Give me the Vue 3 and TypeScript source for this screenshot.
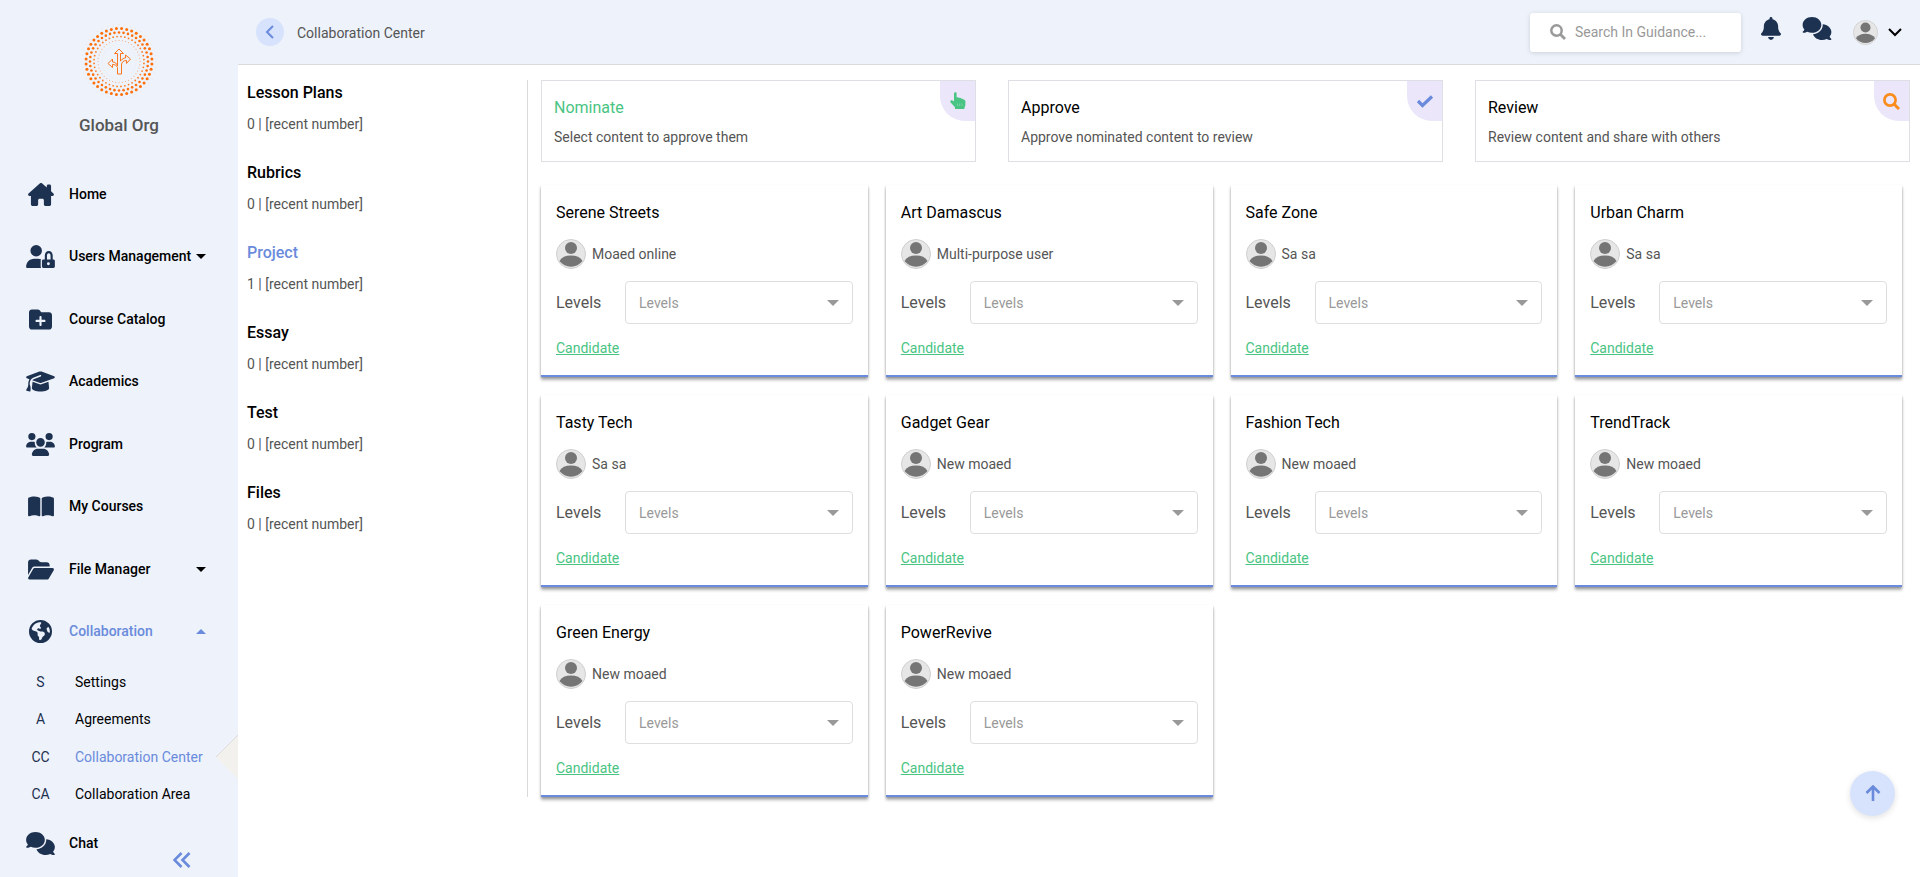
<script setup lang="ts">
import { ref } from 'vue'

interface Glyph { box: string; w: number; d: string }
interface NavItem { label: string; icon: string; caret?: 'down' | 'up'; children?: SubItem[] }
interface SubItem { short: string; label: string; active?: boolean }
interface Topic { title: string; count: number }
interface Stage { title: string; text: string; icon: 'hand' | 'check' | 'search' }
interface Project { title: string; owner: string }

const glyphs: Record<string, Glyph> = {
  home: { box: '0 0 576 512', w: 26, d: 'M575.8 255.5c0 18-15 32.1-32 32.1h-32l.7 160.2c0 2.7-.2 5.4-.5 8.1V472c0 22.1-17.9 40-40 40H392c-22.1 0-40-17.9-40-40V384c0-17.700-14.300-32-32-32H256c-17.700 0-32 14.300-32 32v88c0 22.100-17.900 40-40 40H104c-22.100 0-40-17.900-40-40V287.600H32c-18 0-32-14-32-32.100c0-9 3-17 10-24L266.400 8c7-7 15-8 22-8s15 2 21 7L416 101V64c0-17.700 14.300-32 32-32h32c17.700 0 32 14.300 32 32v121l52.800 46.500c8 7 12 15 11 24z' },
  users: { box: '0 0 640 512', w: 29, d: 'M224 256A128 128 0 1 0 224 0a128 128 0 1 0 0 256zm-45.700 48C79.800 304 0 383.800 0 482.300C0 498.700 13.300 512 29.700 512H334c-7-9.400-10-20.300-10-32V352c0-12 3-24 9-34c-26-9-48-14-61-14H178.300zM384 272v48c-17.700 0-32 14.300-32 32V480c0 17.700 14.300 32 32 32H608c17.700 0 32-14.300 32-32V352c0-17.700-14.300-32-32-32h-16V236c0-60-36-100-88-100s-88 40-88 100v84h-32zM464 320v-80c0-34 14-54 40-54s40 20 40 54v80zM496 384a32 32 0 1 1 0 64a32 32 0 1 1 0-64z' },
  catalog: { box: '0 0 512 512', w: 23, d: 'M512 416c0 35.300-28.700 64-64 64H64c-35.300 0-64-28.700-64-64V96C0 60.700 28.700 32 64 32H192c20.100 0 39.100 9.500 51.200 25.600l19.200 25.600c6 8.100 15.500 12.800 25.600 12.800H448c35.300 0 64 28.700 64 64V416zM232 376c0 13.300 10.700 24 24 24s24-10.700 24-24V312h64c13.300 0 24-10.700 24-24s-10.700-24-24-24H280V200c0-13.300-10.700-24-24-24s-24 10.700-24 24v64H168c-13.300 0-24 10.700-24 24s10.700 24 24 24h64v64z' },
  academics: { box: '0 0 640 512', w: 29, d: 'M320 32c-8.100 0-16.100 1.400-23.700 4.100L15.800 137.400C6.300 140.900 0 149.900 0 160s6.300 19.100 15.800 22.600l57.900 20.900C57.300 229.300 48 259.800 48 291.900v28.100c0 28.400-10.800 57.700-22.300 80.800c-6.500 13-13.900 25.800-22.500 37.600C0 442.700-.9 448.300 .9 453.400s6 8.900 11.200 10.200l64 16c4.200 1.100 8.700 .3 12.400-2s6.300-6.100 7.100-10.400c8.600-42.800 4.300-81.200-2.100-108.700C90.300 344.300 86 329.800 80 316.500V291.900c0-30.200 10.200-58.700 27.900-81.500c12.900-15.500 29.600-28 49.200-35.700l157-61.700c8.200-3.200 17.500 .8 20.700 9s-.8 17.500-9 20.700l-157 61.700c-12.400 4.900-23.300 12.400-32.200 21.600l159.600 57.600c7.600 2.700 15.600 4.100 23.700 4.100s16.100-1.400 23.700-4.100L624.200 182.600c9.500-3.400 15.800-12.500 15.800-22.600s-6.300-19.100-15.800-22.600L343.700 36.100C336.100 33.400 328.100 32 320 32zM128 408c0 35.300 86 72 192 72s192-36.700 192-72L496.700 262.600 354.500 314c-11.100 4-22.800 6-34.500 6s-23.500-2-34.500-6L143.300 262.600 128 408z' },
  program: { box: '0 0 640 512', w: 29, d: 'M128 0a80 80 0 1 1 0 160A80 80 0 1 1 128 0zM512 0a80 80 0 1 1 0 160A80 80 0 1 1 512 0zM0 298.700C0 239.800 47.800 192 106.700 192h42.700c15.900 0 31 3.500 44.600 9.700c-1.300 7.200-1.900 14.700-1.900 22.300c0 38.200 16.800 72.500 43.300 96H21.300C9.600 320 0 310.400 0 298.700zM404.600 320c26.600-23.500 43.300-57.800 43.300-96c0-7.600-.7-15-1.900-22.300c13.600-6.300 28.700-9.700 44.600-9.700h42.700C592.200 192 640 239.800 640 298.700c0 11.800-9.600 21.300-21.300 21.300H404.600zM224 208a96 96 0 1 1 192 0 96 96 0 1 1 -192 0zM128 485.300C128 411.700 187.700 352 261.300 352H378.700C452.300 352 512 411.700 512 485.300c0 14.700-11.900 26.700-26.700 26.700H154.700c-14.700 0-26.700-11.900-26.700-26.700z' },
  courses: { box: '0 0 576 512', w: 26, d: 'M249.600 471.500c10.800 3.800 22.400-4.100 22.400-15.500V78.600c0-4.200-1.600-8.400-5-11C247.400 52 202.400 32 144 32C93.500 32 46.300 45.300 18.100 56.100C6.800 60.500 0 71.700 0 83.800V454.100c0 11.900 12.800 20.200 24.100 16.500C55.600 460.100 105.500 448 144 448c33.900 0 79 14 105.600 23.500zm76.800 0C353 462 398.100 448 432 448c38.500 0 88.400 12.100 119.900 22.600c11.300 3.800 24.100-4.600 24.100-16.500V83.800c0-12.100-6.800-23.300-18.100-27.600C529.700 45.300 482.500 32 432 32c-58.400 0-103.400 20-123 35.600c-3.300 2.600-5 6.800-5 11V456c0 11.400 11.700 19.300 22.400 15.500z' },
  files: { box: '0 0 576 512', w: 26, d: 'M88.700 223.800L0 375.800V96C0 60.700 28.700 32 64 32H181.500c17 0 33.300 6.700 45.300 18.700l26.500 26.500c12 12 28.300 18.700 45.300 18.700H416c35.300 0 64 28.700 64 64v32H144c-22.800 0-43.800 12.100-55.300 31.800zm27.600 16.100C122.100 230 132.600 224 144 224H544c11.500 0 22 6.100 27.700 16.100s5.700 22.200-.1 32.100l-112 192C453.900 474 443.400 480 432 480H32c-11.500 0-22-6.100-27.700-16.100s-5.700-22.200 .1-32.100l112-192z' },
  globe: { box: '0 0 512 512', w: 23, d: 'M57.700 193l9.400 16.400c8.300 14.500 21.900 25.200 38 29.800L163 255.700c17.200 4.900 29 20.600 29 38.500v39.900c0 11 6.200 21 16 25.900s16 14.900 16 25.900v39c0 15.600 14.900 26.900 29.900 22.600c16.100-4.600 28.600-17.500 32.700-33.800l2.800-11.200c4.200-16.900 15.200-31.400 30.300-40l8.100-4.600c15-8.500 24.200-24.500 24.200-41.700v-8.300c0-12.700-5.100-24.900-14.100-33.900l-3.900-3.900c-9-9-21.200-14.100-33.900-14.100H257c-11.100 0-22.100-2.900-31.800-8.400l-34.500-19.700c-4.300-2.500-7.600-6.500-9.200-11.200c-3.200-9.600 1.100-20 10.200-24.500l5.900-3c6.600-3.300 14.300-3.900 21.300-1.500l23.200 7.700c8.200 2.700 17.200-.4 21.900-7.500c4.700-7 4.200-16.300-1.200-22.800l-13.600-16.300c-10-12-9.900-29.500 .3-41.300l15.700-18.300c8.800-10.300 10.200-25 3.500-36.700l-2.400-4.200c-3.500-.2-6.900-.3-10.400-.3C163.100 48 84.400 108.900 57.700 193zM464 256c0-36.800-9.600-71.400-26.400-101.500L412 164.800c-15.700 6.300-23.800 23.800-18.500 39.800l16.900 50.700c3.500 10.400 12 18.300 22.600 20.900l29.100 7.300c1.200-9 1.800-18.200 1.800-27.500zM0 256a256 256 0 1 1 512 0A256 256 0 1 1 0 256z' },
  chat: { box: '0 0 640 512', w: 29, d: 'M208 352c114.900 0 208-78.800 208-176S322.900 0 208 0S0 78.800 0 176c0 38.600 14.700 74.300 39.600 103.400c-3.500 9.400-8.700 17.700-14.200 24.700c-4.800 6.200-9.700 11-13.300 14.300c-1.800 1.600-3.300 2.900-4.300 3.700l-1.300 1C1 327.200-1.400 334.400 .8 340.900S9.100 352 16 352c21.800 0 43.800-5.600 62.100-12.500c9.200-3.500 17.800-7.400 25.300-11.400C134.100 343.300 169.800 352 208 352zM448 176c0 112.300-99.100 196.900-216.500 207C255.800 457.400 336.400 512 432 512c38.200 0 73.900-8.700 104.700-23.900c7.500 4 16 7.900 25.200 11.400c18.300 6.900 40.300 12.500 62.100 12.500c6.900 0 13.100-4.500 15.200-11.100c2.100-6.600-.2-13.800-5.800-17.900l-1.300-1c-1-.8-2.500-2-4.300-3.700c-3.600-3.300-8.500-8.100-13.300-14.300c-5.500-7-10.700-15.400-14.200-24.700c24.900-29 39.600-64.700 39.600-103.400c0-92.800-84.900-168.900-192.600-175.500c.4 5.100 .6 10.300 .6 15.500z' },
}
const bell = 'M224 0c-17.700 0-32 14.300-32 32V51.200C119 66 64 130.600 64 208v18.800c0 47-17.300 92.400-48.500 127.600l-7.400 8.300c-8.400 9.400-10.400 22.900-5.300 34.400S19.400 416 32 416H416c12.600 0 24-7.400 29.200-18.900s3.100-25-5.300-34.400l-7.400-8.300C401.300 319.200 384 273.900 384 226.800V208c0-77.400-55-142-128-156.800V32c0-17.700-14.300-32-32-32zm45.300 493.300c12-12 18.700-28.300 18.700-45.300H224 160c0 17 6.700 33.300 18.700 45.300s28.300 18.700 45.300 18.700s33.300-6.700 45.300-18.700z'

const nav: NavItem[] = [
  { label: 'Home', icon: 'home' },
  { label: 'Users Management', icon: 'users', caret: 'down' },
  { label: 'Course Catalog', icon: 'catalog' },
  { label: 'Academics', icon: 'academics' },
  { label: 'Program', icon: 'program' },
  { label: 'My Courses', icon: 'courses' },
  { label: 'File Manager', icon: 'files', caret: 'down' },
  {
    label: 'Collaboration', icon: 'globe', caret: 'up',
    children: [
      { short: 'S', label: 'Settings' },
      { short: 'A', label: 'Agreements' },
      { short: 'CC', label: 'Collaboration Center', active: true },
      { short: 'CA', label: 'Collaboration Area' },
    ],
  },
  { label: 'Chat', icon: 'chat' },
]

const topics: Topic[] = [
  { title: 'Lesson Plans', count: 0 },
  { title: 'Rubrics', count: 0 },
  { title: 'Project', count: 1 },
  { title: 'Essay', count: 0 },
  { title: 'Test', count: 0 },
  { title: 'Files', count: 0 },
]

const stages: Stage[] = [
  { title: 'Nominate', text: 'Select content to approve them', icon: 'hand' },
  { title: 'Approve', text: 'Approve nominated content to review', icon: 'check' },
  { title: 'Review', text: 'Review content and share with others', icon: 'search' },
]

const projects: Project[] = [
  { title: 'Serene Streets', owner: 'Moaed online' },
  { title: 'Art Damascus', owner: 'Multi-purpose user' },
  { title: 'Safe Zone', owner: 'Sa sa' },
  { title: 'Urban Charm', owner: 'Sa sa' },
  { title: 'Tasty Tech', owner: 'Sa sa' },
  { title: 'Gadget Gear', owner: 'New moaed' },
  { title: 'Fashion Tech', owner: 'New moaed' },
  { title: 'TrendTrack', owner: 'New moaed' },
  { title: 'Green Energy', owner: 'New moaed' },
  { title: 'PowerRevive', owner: 'New moaed' },
]

const activeTopic = ref('Project')
const activeStage = ref('Nominate')
const query = ref('')

// Concentric rings of dots around the emblem: [radius, dot radius, opacity]
const rings: [number, number, number][] = [
  [37, 0.4, 0.25],
  [33, 1.5, 1],
  [29, 1.3, 1],
  [25, 0.9, 0.9],
  [21, 0.5, 0.65],
  [17, 0.3, 0.25],
]
const dots = rings.flatMap(([radius, size, opacity], ring) =>
  Array.from({ length: 40 }, (_, i) => {
    const angle = ((i + (ring % 2) / 2) * Math.PI) / 20
    return { x: 37 + radius * Math.cos(angle), y: 37.5 + radius * Math.sin(angle), size, opacity }
  }),
)
</script>

<template>
  <div class="app">
    <aside class="sidebar">
      <div class="brand">
        <svg class="logo" viewBox="0 0 75 75" aria-hidden="true">
          <circle v-for="(p, i) in dots" :key="i" :cx="p.x" :cy="p.y" :r="p.size" :opacity="p.opacity" fill="#ff6f0a" />
          <path d="M35.500 43.500V50h4v-9c0-3 2-4.500 5-4.500v3l4-4.500-5-4v3c-2 0-3 1-5 3V29.500h3L37 25l-4.500 4.500h3V42c-1-3-2.500-4-5-4v-3L26 39.500l4.500 4v-3c2 0 4 .5 5 3" fill="none" stroke="#f8761f" />
        </svg>
        <span class="org">Global Org</span>
      </div>
      <nav>
        <template v-for="item in nav" :key="item.label">
          <a href="#" class="nav-item" :class="{ current: item.children }">
            <span class="nav-icon">
              <svg :width="glyphs[item.icon].w" height="23" :viewBox="glyphs[item.icon].box" aria-hidden="true">
                <path :d="glyphs[item.icon].d" fill="currentColor" fill-rule="evenodd" />
              </svg>
            </span>
            <span class="nav-label">{{ item.label }}</span>
            <svg v-if="item.caret" class="caret" viewBox="0 0 10 5" aria-hidden="true">
              <path :d="item.caret === 'down' ? 'M0 0h10L5 5z' : 'M0 5h10L5 0z'" fill="currentColor" />
            </svg>
          </a>
          <a v-for="sub in item.children" :key="sub.label" href="#" class="sub-item" :class="{ active: sub.active }">
            <span class="short">{{ sub.short }}</span>
            <span class="sub-label">{{ sub.label }}</span>
            <svg v-if="sub.active" class="pointer" viewBox="0 0 22 44" aria-hidden="true">
              <path d="M22 0L0 22l22 22z" fill="#f3f1ee" />
              <path d="M22 0L0 22" fill="none" stroke="#dcdcdc" />
            </svg>
          </a>
        </template>
      </nav>
      <button class="collapse" type="button" aria-label="Collapse menu">
        <svg width="18" height="16" viewBox="0 0 18 16"><path d="M8.500 1L1.500 8l7 7M16.500 1l-7 7 7 7" fill="none" stroke="#6a8bdb" stroke-width="2.600" /></svg>
      </button>
    </aside>

    <div class="page">
      <header class="topbar">
        <button class="back" type="button" aria-label="Back">
          <svg width="10" height="14" viewBox="0 0 10 14"><path d="M8 1L2 7l6 6" fill="none" stroke="#6a8bdb" stroke-width="2" /></svg>
        </button>
        <h1>Collaboration Center</h1>
        <label class="search">
          <svg width="16" height="16" viewBox="0 0 16 16" aria-hidden="true"><circle cx="6.500" cy="6.500" r="5.200" fill="none" stroke="#999" stroke-width="2.500" /><path d="M10.300 10.300l4.700 4.700" stroke="#999" stroke-width="2.800" /></svg>
          <input v-model="query" type="text" placeholder="Search In Guidance..." aria-label="Search in guidance">
        </label>
        <button class="tool" type="button" aria-label="Notifications">
          <svg width="20" height="23" viewBox="0 0 448 512"><path :d="bell" fill="currentColor" /></svg>
        </button>
        <button class="tool" type="button" aria-label="Messages">
          <svg width="30" height="23" viewBox="0 0 640 512"><path :d="glyphs.chat.d" fill="currentColor" /></svg>
        </button>
        <button class="account" type="button" aria-label="Account">
          <svg class="avatar small" viewBox="0 0 30 30">
            <circle cx="15" cy="15" r="14.500" fill="#e6e6e6" stroke="#cfcfcf" />
            <circle cx="15" cy="9" r="6" fill="#757575" />
            <path d="M3.500 22a12.500 9 0 0 1 23 0A14.500 14.500 0 0 1 3.500 22z" fill="#757575" />
          </svg>
          <svg width="14" height="9" viewBox="0 0 14 9"><path d="M1 1l6 6 6-6" fill="none" stroke="#000" stroke-width="2" /></svg>
        </button>
      </header>

      <div class="body">
        <ul class="topics">
          <li v-for="topic in topics" :key="topic.title">
            <button type="button" class="topic" :class="{ active: activeTopic === topic.title }" @click="activeTopic = topic.title">
              <span class="topic-title">{{ topic.title }}</span>
              <span class="topic-count">{{ topic.count }} | [recent number]</span>
            </button>
          </li>
        </ul>

        <main class="content">
          <div class="stages">
            <button v-for="stage in stages" :key="stage.title" type="button" class="stage" :class="{ active: activeStage === stage.title }" @click="activeStage = stage.title">
              <span class="stage-title">{{ stage.title }}</span>
              <span class="stage-text">{{ stage.text }}</span>
              <span class="badge">
                <svg v-if="stage.icon === 'hand'" width="16" height="18" viewBox="0 0 16 18"><path d="M4 1.500a1.300 1.300 0 0 1 2.600 0V5.500c.8-.6 2-.3 2.500.5.900-.4 2-.1 2.400.8 1-.3 1.900.1 2.200.9 1-.1 1.700.5 1.700 1.500v3.300c0 1.500-1 2.300-1 3.800V17H5v-1.200c0-1-1-1.700-1.800-2.600L.6 10.400c-1-1.300.6-2.700 1.900-1.900L4 9.500z" fill="#49c483" /><path d="M7.500 11.500v2.500M9.700 11.500v2.500M12 11.500v2.500" stroke="#8fdab4" stroke-width=".7" /></svg>
                <svg v-else-if="stage.icon === 'check'" width="18" height="14" viewBox="0 0 18 14"><path d="M2 7L6.500 11.500 16 2.500" fill="none" stroke="#6a8bdb" stroke-width="3.200" /></svg>
                <svg v-else width="17" height="17" viewBox="0 0 17 17"><circle cx="7" cy="7" r="5.600" fill="none" stroke="#fa8c1c" stroke-width="2.700" /><path d="M11 11l5 5" stroke="#fa8c1c" stroke-width="3" /></svg>
              </span>
            </button>
          </div>

          <div class="cards">
            <article v-for="(project, i) in projects" :key="project.title" class="card">
              <h2>{{ project.title }}</h2>
              <div class="owner">
                <svg class="avatar" viewBox="0 0 30 30" aria-hidden="true">
                  <circle cx="15" cy="15" r="14.500" fill="#e6e6e6" stroke="#cfcfcf" />
                  <circle cx="15" cy="9" r="6" fill="#757575" />
                  <path d="M3.500 22a12.500 9 0 0 1 23 0A14.500 14.500 0 0 1 3.500 22z" fill="#757575" />
                </svg>
                <span>{{ project.owner }}</span>
              </div>
              <div class="levels">
                <label :for="'levels-' + i">Levels</label>
                <span class="select-wrap">
                  <select :id="'levels-' + i"><option>Levels</option></select>
                  <svg class="select-caret" viewBox="0 0 12 6" aria-hidden="true"><path d="M0 0h12L6 6z" fill="#999" /></svg>
                </span>
              </div>
              <a href="#" class="candidate">Candidate</a>
            </article>
          </div>
        </main>
      </div>
    </div>

    <button class="to-top" type="button" aria-label="Back to top">
      <svg width="16" height="17" viewBox="0 0 16 17"><path d="M8 16V2M1.500 8L8 1.500 14.500 8" fill="none" stroke="#6a8bdb" stroke-width="2.600" /></svg>
    </button>
  </div>
</template>

<style>
body {
  margin: 0;
  background: #fff;
}
</style>

<style scoped>
* {
  box-sizing: border-box;
}
.app {
  display: flex;
  min-height: 100vh;
  font-family: Roboto, "Open Sans", sans-serif;
  font-size: 14px;
  line-height: 20px;
  color: #555;
}
button {
  font: inherit;
  color: inherit;
  background: none;
  border: 0;
  padding: 0;
  text-align: left;
  cursor: pointer;
}
a {
  color: inherit;
  text-decoration: none;
}
svg {
  display: block;
  flex: none;
}
.sidebar {
  position: relative;
  flex: none;
  width: 238px;
  background: #edf2fb;
}
.brand {
  display: flex;
  flex-direction: column;
  align-items: center;
  gap: 13px;
  padding: 24px 0;
}
.logo {
  width: 75px;
  height: 75px;
}
.org {
  font-size: 17px;
  line-height: 27px;
  font-weight: 500;
}
.nav-item {
  display: flex;
  align-items: center;
  padding: 20px 32px 20px 26px;
  font-size: 15px;
  line-height: 1.5;
  font-weight: 500;
  color: #000;
}
.nav-icon {
  display: flex;
  justify-content: center;
  align-items: center;
  width: 29px;
  height: 1.5em;
  margin-right: 14px;
  color: #1d3150;
}
.nav-label {
  flex: 1;
  font-size: 14px;
  white-space: nowrap;
}
.current {
  color: #6a8bdb;
}
.caret {
  width: 10px;
  height: 5px;
}
.sub-item {
  position: relative;
  display: flex;
  padding: 8px 0 7px 26px;
  font-size: 14px;
  line-height: 1.6;
  color: #000;
}
.short {
  width: 29px;
  margin-right: 20px;
  text-align: center;
  color: #1d3150;
}
.active .sub-label {
  color: #6a8bdb;
}
.pointer {
  position: absolute;
  right: 0;
  top: -3px;
  width: 22px;
  height: 44px;
}
.collapse {
  position: absolute;
  right: 47px;
  bottom: 9px;
}
.page {
  flex: 1;
  min-width: 0;
}
.topbar {
  display: flex;
  align-items: center;
  height: 65px;
  padding: 0 18px;
  background: #edf2fb;
  border-bottom: 1px solid #dadada;
}
.back {
  display: flex;
  align-items: center;
  justify-content: center;
  width: 28px;
  height: 28px;
  margin-right: 13px;
  border-radius: 50%;
  background: #d7e3fc;
}
h1 {
  flex: 1;
  margin: 0;
  padding-top: 2px;
  font-size: 14px;
  font-weight: 400;
}
.search {
  display: flex;
  align-items: center;
  gap: 9px;
  width: 211px;
  height: 39px;
  padding: 0 20px;
  margin-right: 20px;
  background: #fff;
  border-radius: 3px;
  box-shadow: 0 1px 5px rgba(0, 0, 0, 0.14);
}
.search input {
  width: 100%;
  min-width: 0;
  padding: 0;
  border: 0;
  outline: 0;
  font: inherit;
  color: #555;
  background: none;
}
.search input::placeholder {
  color: #999;
}
.tool {
  margin-right: 21px;
  padding-bottom: 7px;
  color: #1d3150;
}
.account {
  display: flex;
  align-items: center;
  gap: 10px;
}
.avatar {
  width: 30px;
  height: 30px;
}
.avatar.small {
  width: 25px;
  height: 25px;
}
.body {
  display: flex;
  padding: 15px 10px 16px 9px;
}
.topics {
  flex: none;
  width: 281px;
  margin: 0;
  padding: 0;
  list-style: none;
  border-right: 1px solid #dadada;
}
.topics li {
  display: flex;
}
.topic {
  width: 100%;
  padding-bottom: 26px;
}
.topic-title,
.topic-count {
  display: block;
}
.topic-title {
  margin-bottom: 8px;
  font-size: 16px;
  line-height: 26px;
  font-weight: 500;
  color: #000;
}
.topic.active .topic-title {
  color: #6a8bdb;
}
.content {
  flex: 1;
  min-width: 0;
  padding-left: 13px;
}
.stages {
  display: grid;
  grid-template-columns: repeat(3, 1fr);
  gap: 32px;
  margin-bottom: 23px;
}
.stage {
  position: relative;
  height: 82px;
  padding: 3px 12px 0;
  border: 1px solid #dedfe5;
}
.stage-title,
.stage-text {
  display: block;
}
.stage-title {
  margin-bottom: 9px;
  font-size: 16px;
  line-height: 20px;
  color: #000;
}
.stage.active .stage-title {
  color: #49c483;
}
.badge {
  position: absolute;
  top: 0;
  right: 0;
  display: flex;
  align-items: center;
  justify-content: center;
  width: 35px;
  height: 40px;
  border-bottom-left-radius: 25px;
  background: #ebe6f9;
}
.cards {
  display: grid;
  grid-template-columns: repeat(4, 1fr);
  gap: 18px;
  margin-right: 8px;
}
.card {
  padding: 16px 15px 17px;
  border-bottom: 2px solid #6a8bdb;
  background: #fff;
  box-shadow: 0 3px 3px rgba(0, 0, 0, 0.3), 0 1px 2px rgba(0, 0, 0, 0.2);
}
h2 {
  margin: 0 0 14px;
  font-size: 16px;
  line-height: 24px;
  font-weight: 400;
  color: #000;
}
.owner {
  display: flex;
  align-items: center;
  gap: 6px;
  margin-bottom: 12px;
}
.levels {
  display: flex;
  align-items: center;
  margin-bottom: 14px;
}
.levels label {
  width: 69px;
  font-size: 16px;
}
.select-wrap {
  position: relative;
  flex: 1;
}
select {
  display: block;
  width: 100%;
  height: 43px;
  padding: 0 13px;
  appearance: none;
  border: 1px solid #dedede;
  border-radius: 4px;
  background: #fff;
  font: inherit;
  color: #999;
}
.select-caret {
  position: absolute;
  right: 14px;
  top: 19px;
  width: 12px;
  height: 6px;
  pointer-events: none;
}
.candidate {
  display: inline-block;
  vertical-align: top;
  color: #49c483;
  text-decoration: underline;
}
.to-top {
  position: fixed;
  right: 25px;
  bottom: 61px;
  display: flex;
  align-items: center;
  justify-content: center;
  width: 45px;
  height: 45px;
  border-radius: 50%;
  background: #d7e3fc;
  box-shadow: 0 2px 6px rgba(0, 0, 0, 0.12);
}
</style>
